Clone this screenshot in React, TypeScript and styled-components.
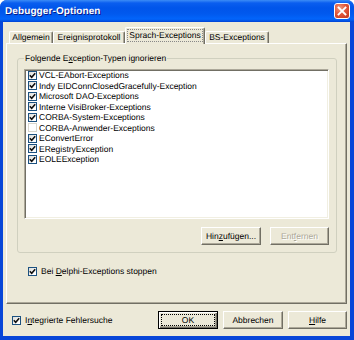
import React from "react";
import styled, { createGlobalStyle } from "styled-components";

const GlobalStyle = createGlobalStyle`
  html, body {
    margin: 0;
    padding: 0;
    background: #fff;
  }
  body {
    font-family: "Liberation Sans", Arial, sans-serif;
    font-size: 8.5px;
    color: #000;
    text-rendering: geometricPrecision;
  }
`;

const Window = styled.div`
  width: 354px;
  height: 340px;
  display: flex;
  flex-direction: column;
  background: #0846d8;
  border-radius: 7px 7px 0 0;
  overflow: hidden;
`;

const TitleBar = styled.div`
  height: 22px;
  flex: none;
  display: flex;
  align-items: center;
  justify-content: space-between;
  padding: 0 4px 0 5px;
  background: linear-gradient(
    #3c8cf6 0px,
    #0a5eef 3px,
    #0055ea 8px,
    #0159ee 14px,
    #0265fb 19px,
    #0152e2 21px,
    #003fd3 22px
  );
`;

const Title = styled.span`
  color: #fff;
  font-weight: bold;
  font-size: 10px;
  letter-spacing: 0.1px;
  text-shadow: 1px 1px #0a1a88;
`;

const CloseButton = styled.span`
  width: 16px;
  height: 16px;
  box-sizing: border-box;
  border: 1px solid #fff;
  border-radius: 3px;
  background: radial-gradient(circle at 35% 30%, #f29a7c 0%, #e2573a 45%, #c2351a 100%);
  display: flex;
  align-items: center;
  justify-content: center;
`;

const Client = styled.div`
  flex: 1;
  margin: 0 4px 4px 3px;
  background: #ece9d8;
  display: flex;
  flex-direction: column;
  padding: 5px 3px 0 3px;
`;

const TabStrip = styled.div`
  height: 16px;
  flex: none;
  display: flex;
  align-items: flex-end;
  padding-left: 3px;
`;

const Tab = styled.div<{ $active?: boolean; $w: number }>`
  position: relative;
  z-index: ${(p) => (p.$active ? 2 : 1)};
  width: ${(p) => p.$w}px;
  height: ${(p) => (p.$active ? 17 : 12)}px;
  margin-bottom: ${(p) => (p.$active ? -1 : 0)}px;
  box-sizing: border-box;
  background: #ece9d8;
  border-top: 1px solid #fff;
  border-left: 1px solid #fff;
  border-right: 1px solid #716f64;
  border-radius: 2px 2px 0 0;
  box-shadow: inset -1px 0 #aca899;
  display: flex;
  justify-content: center;
  align-items: flex-start;
  padding-top: ${(p) => (p.$active ? 2 : 0)}px;
  line-height: 11px;
  white-space: nowrap;
`;

const FocusText = styled.span`
  outline: 1px dotted #888;
  outline-offset: 0px;
  padding: 0 1px;
`;

const Page = styled.div`
  height: 261px;
  flex: none;
  box-sizing: border-box;
  border-top: 1px solid #fff;
  border-left: 1px solid #fff;
  border-right: 1px solid #716f64;
  border-bottom: 1px solid #716f64;
  box-shadow: inset -1px -1px #aca899;
  padding: 9px 0 0 10px;
  display: flex;
  flex-direction: column;
`;

const GroupBox = styled.fieldset`
  width: 320px;
  box-sizing: border-box;
  margin: 0;
  padding: 0 7px 7px 6px;
  border: 1px solid #d0d0bf;
  border-radius: 3px;
  display: flex;
  flex-direction: column;
`;

const Legend = styled.legend`
  padding: 0 1px;
  margin-left: 0;
  line-height: 10px;
  white-space: nowrap;
`;

const ListBox = styled.div`
  margin-top: 6px;
  height: 150px;
  box-sizing: border-box;
  background: #fff;
  border-top: 1px solid #aca899;
  border-left: 1px solid #aca899;
  border-right: 1px solid #fff;
  border-bottom: 1px solid #fff;
  box-shadow: inset 1px 1px #716f64, inset -1px -1px #f1efe2;
  padding: 0 0 0 3px;
`;

const ListItem = styled.div`
  height: 10.5px;
  display: flex;
  align-items: center;
  gap: 2px;
  white-space: nowrap;
`;

const ButtonRow = styled.div`
  margin-top: 8px;
  display: flex;
  justify-content: flex-end;
  gap: 9px;
`;

const Button = styled.div<{ $w?: number; $disabled?: boolean; $default?: boolean }>`
  width: ${(p) => p.$w ?? 60}px;
  height: 18px;
  box-sizing: border-box;
  display: flex;
  align-items: center;
  justify-content: center;
  background: #ece9d8;
  color: ${(p) => (p.$disabled ? "#aca899" : "#000")};
  border: 1px solid;
  border-color: ${(p) => (p.$default ? "#000" : "#fff #716f64 #716f64 #fff")};
  box-shadow: ${(p) =>
    p.$default
      ? "inset 1px 1px #fff, inset -1px -1px #716f64, inset -2px -2px #aca899"
      : "inset -1px -1px #aca899"};
  outline: ${(p) => (p.$default ? "1px dotted #000" : "none")};
  outline-offset: -4px;
  white-space: nowrap;
  ${(p) => (p.$disabled ? "text-shadow: 1px 1px #fff;" : "")}
`;

const CheckRow = styled.div<{ $indent?: number }>`
  display: flex;
  align-items: center;
  gap: 4px;
  height: 10px;
  margin-left: ${(p) => p.$indent ?? 0}px;
  white-space: nowrap;
`;

const DelphiRow = styled(CheckRow)`
  margin-top: 13px;
`;

const Footer = styled.div`
  height: 32px;
  flex: none;
  display: flex;
  align-items: center;
  padding: 0 0 0 6px;
`;

const Spacer = styled.div`
  flex: 1;
`;

const FooterButtons = styled.div`
  display: flex;
  gap: 5px;
`;

const Box = styled.span<{ $faint?: boolean }>`
  width: 9px;
  height: 9px;
  flex: none;
  box-sizing: border-box;
  border: 1px solid ${(p) => (p.$faint ? "#d8d6cc" : "#1c5180")};
  background: ${(p) => (p.$faint ? "#fff" : "linear-gradient(135deg, #dcdcd7, #fff 80%)")};
  display: inline-flex;
  align-items: center;
  justify-content: center;
`;

const CheckBox = ({ checked = true, faint }: { checked?: boolean; faint?: boolean }) => (
  <Box $faint={faint}>
    {checked && (
      <svg width="7" height="7" viewBox="0 0 7 7">
        <polyline points="0.8,3.2 2.7,5.2 6.2,1.2" fill="none" stroke="#111" strokeWidth="1.6" />
      </svg>
    )}
  </Box>
);

const exceptions: { name: string; checked: boolean }[] = [
  { name: "VCL-EAbort-Exceptions", checked: true },
  { name: "Indy EIDConnClosedGracefully-Exception", checked: true },
  { name: "Microsoft DAO-Exceptions", checked: true },
  { name: "Interne VisiBroker-Exceptions", checked: true },
  { name: "CORBA-System-Exceptions", checked: true },
  { name: "CORBA-Anwender-Exceptions", checked: false },
  { name: "EConvertError", checked: true },
  { name: "ERegistryException", checked: true },
  { name: "EOLEException", checked: true },
];

export default function App() {
  return (
    <>
      <GlobalStyle />
      <Window>
        <TitleBar>
          <Title>Debugger-Optionen</Title>
          <CloseButton>
            <svg width="10" height="10" viewBox="0 0 10 10">
              <path d="M1.5 1.5 L8.5 8.5 M8.5 1.5 L1.5 8.5" stroke="#fff" strokeWidth="1.8" strokeLinecap="square" />
            </svg>
          </CloseButton>
        </TitleBar>
        <Client>
          <TabStrip>
            <Tab $w={44}>Allgemein</Tab>
            <Tab $w={72}>Ereignisprotokoll</Tab>
            <Tab $w={80} $active>
              <FocusText>Sprach-Exceptions</FocusText>
            </Tab>
            <Tab $w={64}>BS-Exceptions</Tab>
          </TabStrip>
          <Page>
            <GroupBox>
              <Legend>
                Folgende E<u>x</u>ception-Typen ignorieren
              </Legend>
              <ListBox>
                {exceptions.map((e) => (
                  <ListItem key={e.name}>
                    <CheckBox checked={e.checked} faint={!e.checked} />
                    {e.name}
                  </ListItem>
                ))}
              </ListBox>
              <ButtonRow>
                <Button>
                  Hin<u>z</u>ufügen...
                </Button>
                <Button $w={59} $disabled>
                  Ent<u>f</u>ernen
                </Button>
              </ButtonRow>
            </GroupBox>
            <DelphiRow $indent={11}>
              <CheckBox />
              <span>
                Bei <u>D</u>elphi-Exceptions stoppen
              </span>
            </DelphiRow>
          </Page>
          <Footer>
            <CheckRow>
              <CheckBox />
              <span>
                I<u>n</u>tegrierte Fehlersuche
              </span>
            </CheckRow>
            <Spacer />
            <FooterButtons>
              <Button $default>OK</Button>
              <Button>Abbrechen</Button>
              <Button $w={59}>
                <u>H</u>ilfe
              </Button>
            </FooterButtons>
          </Footer>
        </Client>
      </Window>
    </>
  );
}
